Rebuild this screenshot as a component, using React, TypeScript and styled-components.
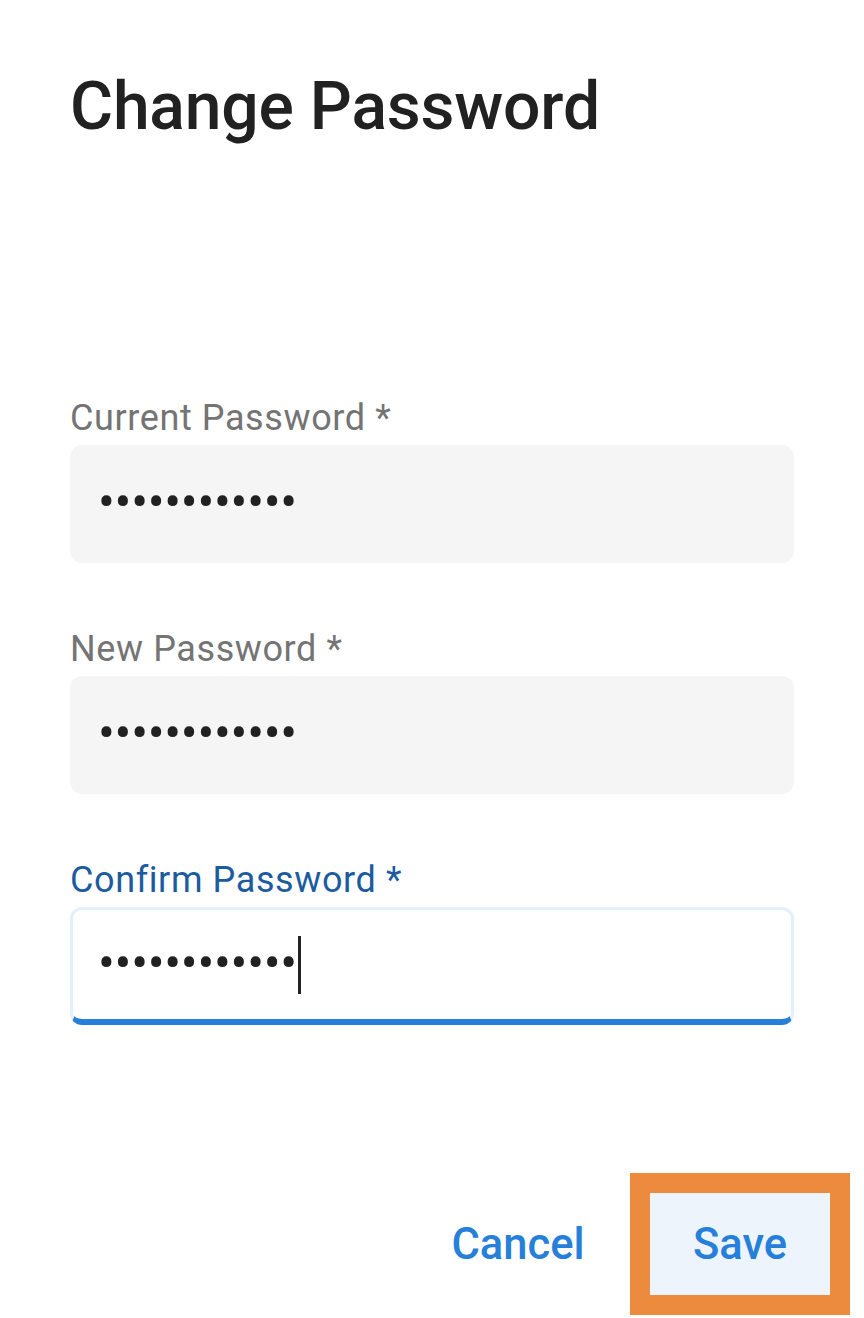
import React from 'react';
import styled, { createGlobalStyle } from 'styled-components';

const GlobalStyle = createGlobalStyle`
  html, body {
    margin: 0;
    padding: 0;
    background: #ffffff;
  }
  body {
    font-family: Roboto, "Noto Sans", "Liberation Sans", sans-serif;
    -webkit-font-smoothing: antialiased;
  }
`;

const Dialog = styled.div`
  width: 864px;
  height: 1318px;
  box-sizing: border-box;
  padding: 67px 0 0 70px;
  display: flex;
  flex-direction: column;
  background: #fff;
`;

const Title = styled.h1`
  margin: 0;
  font-size: 66px;
  line-height: 79px;
  font-weight: 500;
  color: #212121;
  letter-spacing: -0.2px;
`;

const Form = styled.div`
  display: flex;
  flex-direction: column;
  gap: 66px;
  width: 724px;
  margin-top: 252px;
`;

const Field = styled.div`
  display: flex;
  flex-direction: column;
  gap: 7px;
`;

const Label = styled.label<{ $focused?: boolean }>`
  font-size: 36px;
  line-height: 40px;
  font-weight: 400;
  letter-spacing: 0.6px;
  color: ${({ $focused }) => ($focused ? '#1c5c9e' : '#747474')};
`;

const InputBox = styled.div<{ $focused?: boolean }>`
  box-sizing: border-box;
  height: 118px;
  border-radius: 12px;
  padding-left: ${({ $focused }) => ($focused ? '25px' : '28px')};
  display: flex;
  align-items: center;
  background: ${({ $focused }) => ($focused ? '#ffffff' : '#f5f5f5')};
  border: ${({ $focused }) => ($focused ? '3px solid #e2effd' : 'none')};
  border-bottom: ${({ $focused }) => ($focused ? '6px solid #2680d9' : 'none')};
`;

const Dots = styled.span`
  font-size: 50px;
  line-height: 50px;
  letter-spacing: -0.3px;
  color: #212121;
  margin-top: -4px;
`;

const Caret = styled.span`
  display: inline-block;
  width: 3px;
  height: 58px;
  margin-left: 1px;
  background: #222;
`;

const Actions = styled.div`
  display: flex;
  justify-content: flex-end;
  align-items: center;
  gap: 42px;
  margin-top: 168px;
  padding-right: 34px;
`;

const Button = styled.button<{ $highlight?: boolean }>`
  box-sizing: border-box;
  width: 180px;
  height: 102px;
  border: none;
  border-radius: 0;
  font-family: inherit;
  font-size: 43.5px;
  font-weight: 500;
  color: #2680d9;
  background: ${({ $highlight }) => ($highlight ? '#edf4fc' : 'transparent')};
  outline: ${({ $highlight }) => ($highlight ? '20px solid #ec8a3e' : 'none')};
  cursor: pointer;
`;

const fields = [
  { label: 'Current Password', focused: false },
  { label: 'New Password', focused: false },
  { label: 'Confirm Password', focused: true },
];

const App = () => {
  return (
    <>
      <GlobalStyle />
      <Dialog>
        <Title>Change Password</Title>
        <Form>
          {fields.map((f) => (
            <Field key={f.label}>
              <Label $focused={f.focused}>{f.label} *</Label>
              <InputBox $focused={f.focused}>
                <Dots>{'\u2022'.repeat(12)}</Dots>
                {f.focused && <Caret />}
              </InputBox>
            </Field>
          ))}
        </Form>
        <Actions>
          <Button>Cancel</Button>
          <Button $highlight>Save</Button>
        </Actions>
      </Dialog>
    </>
  );
};

export default App;
